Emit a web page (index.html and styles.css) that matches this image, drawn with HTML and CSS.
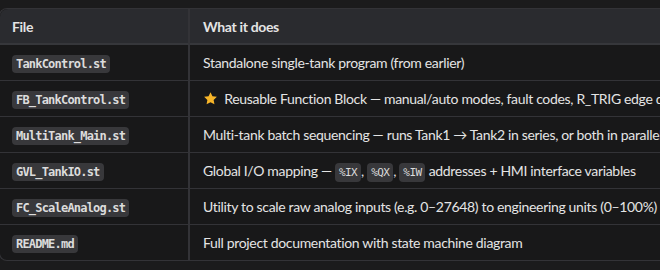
FILE: index.html
```html
<!DOCTYPE html>
<html>
<head>
<meta charset="utf-8">
<link rel="stylesheet" href="styles.css">
</head>
<body>
<div class="wrap">
<table class="files">
  <thead>
    <tr><th class="c1">File</th><th class="c2">What it does</th></tr>
  </thead>
  <tbody>
    <tr><td class="c1"><code>TankControl.st</code></td><td class="c2">Standalone single-tank program (from earlier)</td></tr>
    <tr><td class="c1"><code>FB_TankControl.st</code></td><td class="c2"><svg class="star" viewBox="0 0 24 24" width="15" height="15"><path d="M12 1.8l3.1 6.6 7.1.9-5.2 4.9 1.3 7.1L12 17.8l-6.3 3.5 1.3-7.1-5.2-4.9 7.1-.9z" fill="#f7b529"/></svg> Reusable Function Block — manual/auto modes, fault codes, R_TRIG edge detection</td></tr>
    <tr><td class="c1"><code>MultiTank_Main.st</code></td><td class="c2">Multi-tank batch sequencing — runs Tank1 → Tank2 in series, or both in parallel</td></tr>
    <tr><td class="c1"><code>GVL_TankIO.st</code></td><td class="c2">Global I/O mapping — <code class="sm">%IX</code>, <code class="sm">%QX</code>, <code class="sm">%IW</code> addresses + HMI interface variables</td></tr>
    <tr><td class="c1"><code>FC_ScaleAnalog.st</code></td><td class="c2">Utility to scale raw analog inputs (e.g. 0–27648) to engineering units (0–100%)</td></tr>
    <tr><td class="c1"><code>README.md</code></td><td class="c2">Full project documentation with state machine diagram</td></tr>
  </tbody>
</table>
</div>
</body>
</html>
```
FILE: styles.css
```css
html, body {
  margin: 0;
  padding: 0;
  background: #1b1b1c;
  overflow: hidden;
}
body {
  font-family: "Lato", "Noto Sans", sans-serif;
  color: #e4e4e4;
}
.wrap {
  padding-top: 8px;
}
.files {
  border-collapse: separate;
  border-spacing: 0;
  border: 1px solid #333337;
  border-right: none;
  border-radius: 8px 0 0 8px;
  white-space: nowrap;
  font-size: 14px;
  letter-spacing: -0.33px;
  background: #181819;
  width: 900px;
  margin-left: -1px;
}
.files th {
  background: #2a2b2f;
  font-weight: 700;
  text-align: left;
  height: 34px;
  padding: 0 12px;
  border-bottom: 2px solid #36373b;
}
.files th.c1 { border-top-left-radius: 8px; }
.files td {
  height: 35px;
  padding: 0 12px;
  border-bottom: 1px solid #333337;
  vertical-align: middle;
}
.files tr:last-child td { border-bottom: none; }
.files .c1 {
  width: 164px;
  border-right: 2px solid #333337;
}
.files .c2 { padding-left: 13px; }
code {
  font-family: "DejaVu Sans Mono", monospace;
  font-size: 12px;
  letter-spacing: -0.8px;
  font-weight: bold;
  background: #38383b;
  color: #dcdcdc;
  border-radius: 4px;
  padding: 2px 4px 2px 4px;
}
code.sm {
  font-weight: normal;
  font-size: 11px;
  letter-spacing: -0.6px;
  padding: 3px 4px;
}
.star {
  vertical-align: -2px;
  margin-right: 3px;
}
```
